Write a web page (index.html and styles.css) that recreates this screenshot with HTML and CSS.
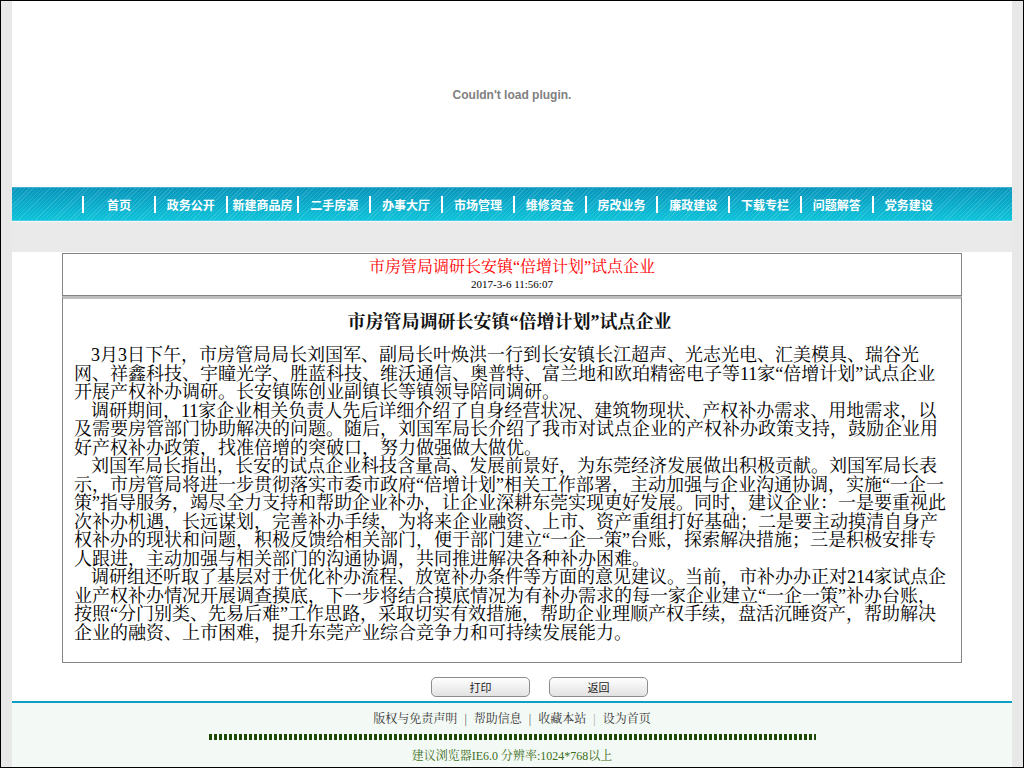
FILE: index.html
```html
<!DOCTYPE html>
<html lang="zh-CN">
<head>
<meta charset="utf-8">
<title>市房管局调研长安镇“倍增计划”试点企业</title>
<link rel="stylesheet" href="styles.css">
</head>
<body>
<div class="frame">
  <div class="page">
    <div class="plugin"><span>Couldn't load plugin.</span></div>
    <nav class="nav">
      <a class="nav-item"><span>首页</span></a>
      <a class="nav-item"><span>政务公开</span></a>
      <a class="nav-item"><span>新建商品房</span></a>
      <a class="nav-item"><span>二手房源</span></a>
      <a class="nav-item"><span>办事大厅</span></a>
      <a class="nav-item"><span>市场管理</span></a>
      <a class="nav-item"><span>维修资金</span></a>
      <a class="nav-item"><span>房改业务</span></a>
      <a class="nav-item"><span>廉政建设</span></a>
      <a class="nav-item"><span>下载专栏</span></a>
      <a class="nav-item"><span>问题解答</span></a>
      <a class="nav-item"><span>党务建设</span></a>
    </nav>
    <div class="band"></div>
    <main class="main">
      <div class="title-box">
        <div class="red-title">市房管局调研长安镇“倍增计划”试点企业</div>
        <div class="date">2017-3-6 11:56:07</div>
      </div>
      <div class="article">
        <h1 class="heading">市房管局调研长安镇“倍增计划”试点企业</h1>
        <div class="body">
          <p>3月3日下午，市房管局局长刘国军、副局长叶焕洪一行到长安镇长江超声、光志光电、汇美模具、瑞谷光<br>网、祥鑫科技、宇瞳光学、胜蓝科技、维沃通信、奥普特、富兰地和欧珀精密电子等11家“倍增计划”试点企业<br>开展产权补办调研。长安镇陈创业副镇长等镇领导陪同调研。</p>
          <p>调研期间，11家企业相关负责人先后详细介绍了自身经营状况、建筑物现状、产权补办需求、用地需求，以<br>及需要房管部门协助解决的问题。随后，刘国军局长介绍了我市对试点企业的产权补办政策支持，鼓励企业用<br>好产权补办政策，找准倍增的突破口，努力做强做大做优。</p>
          <p>刘国军局长指出，长安的试点企业科技含量高、发展前景好，为东莞经济发展做出积极贡献。刘国军局长表<br>示，市房管局将进一步贯彻落实市委市政府“倍增计划”相关工作部署，主动加强与企业沟通协调，实施“一企一<br>策”指导服务，竭尽全力支持和帮助企业补办，让企业深耕东莞实现更好发展。同时，建议企业：一是要重视此<br>次补办机遇，长远谋划，完善补办手续，为将来企业融资、上市、资产重组打好基础；二是要主动摸清自身产<br>权补办的现状和问题，积极反馈给相关部门，便于部门建立“一企一策”台账，探索解决措施；三是积极安排专<br>人跟进，主动加强与相关部门的沟通协调，共同推进解决各种补办困难。</p>
          <p>调研组还听取了基层对于优化补办流程、放宽补办条件等方面的意见建议。当前，市补办办正对214家试点企<br>业产权补办情况开展调查摸底，下一步将结合摸底情况为有补办需求的每一家企业建立“一企一策”补办台账，<br>按照“分门别类、先易后难”工作思路，采取切实有效措施，帮助企业理顺产权手续，盘活沉睡资产，帮助解决<br>企业的融资、上市困难，提升东莞产业综合竞争力和可持续发展能力。</p>
        </div>
      </div>
      <div class="actions">
        <button class="btn" type="button">打印</button>
        <button class="btn" type="button">返回</button>
      </div>
    </main>
    <footer class="footer">
      <div class="links">
        <a>版权与免责声明</a><span class="sep">|</span><a>帮助信息</a><span class="sep">|</span><a>收藏本站</a><span class="sep light">|</span><a>设为首页</a>
      </div>
      <div class="dots"></div>
      <div class="note">建议浏览器IE6.0 分辨率:1024*768以上</div>
    </footer>
  </div>
</div>
</body>
</html>
```
FILE: styles.css
```css
html, body {
  margin: 0;
  padding: 0;
}
body {
  background: #e8e8e8;
  font-family: "Liberation Serif", "Noto Serif CJK SC", "Noto Sans CJK SC", serif;
}
.frame {
  box-sizing: border-box;
  height: 768px;
  border: 1px solid #000;
  overflow: hidden;
}
.page {
  width: 1000px;
  margin: 0 auto;
  background: #fff;
  height: 766px;
  display: flex;
  flex-direction: column;
}
.plugin {
  height: 186px;
  display: flex;
  align-items: center;
  justify-content: center;
  background: #fff;
}
.plugin span {
  font-family: "Liberation Sans", Arial, sans-serif;
  font-weight: bold;
  font-size: 12px;
  color: #808080;
  margin-top: 1px;
}
.nav {
  box-sizing: border-box;
  height: 34px;
  display: flex;
  align-items: center;
  padding-left: 70px;
  border-top: 1px solid #3fb0cf;
  border-bottom: 1px solid #45cde2;
  background:
    repeating-linear-gradient(-45deg, rgba(255,255,255,0.13) 0 1px, rgba(255,255,255,0) 1px 3px),
    linear-gradient(#0795bb, #0bc2d9);
}
.nav-item {
  width: 71.8px;
  flex: none;
  display: flex;
  align-items: center;
  font-family: "Noto Sans CJK SC", sans-serif;
  font-weight: bold;
  font-size: 12px;
  color: #fff;
  white-space: nowrap;
}
.nav-item::before {
  content: "";
  width: 2px;
  height: 17px;
  background: #fff;
  flex: none;
}
.nav-item span {
  flex: 1;
  text-align: center;
}
.band {
  height: 30px;
  background: #eaeaea;
  border-top: 1px solid #f7f7f7;
}
.main {
  padding: 1px 50px 0;
  background: #fff;
}
.title-box {
  border: 1px solid #858585;
  padding: 3px 0 4px;
  text-align: center;
}
.red-title {
  color: #f00;
  font-size: 16px;
  line-height: 20px;
}
.date {
  font-size: 11px;
  line-height: 14px;
  color: #000;
}
.article {
  border: 1px solid #858585;
  border-top: 3px solid #bfbfbf;
  padding: 11px 16px 20px 11px;
  height: 332px;
}
.heading {
  margin: 0;
  text-align: center;
  font-size: 18px;
  line-height: 24px;
  font-weight: bold;
  color: #111;
}
.body {
  margin-top: 12px;
  font-size: 18px;
  line-height: 18.5px;
  color: #000;
  white-space: nowrap;
}
.body p {
  margin: 0;
  text-indent: 17px;
}
.actions {
  display: flex;
  justify-content: center;
  gap: 19px;
  padding: 14px 0 4px 55px;
}
.btn {
  width: 99px;
  height: 20px;
  padding: 0;
  border: 1px solid #8c8c8c;
  border-radius: 5px;
  background: linear-gradient(#ffffff, #ededed 60%, #e2e2e2);
  font-family: "Noto Sans CJK SC", sans-serif;
  font-size: 11px;
  line-height: 18px;
  color: #222;
}
.footer {
  flex: 1;
  border-top: 2px solid #0aa1c4;
  background: #f3faf5;
  display: flex;
  flex-direction: column;
  align-items: center;
}
.links {
  margin-top: 8px;
  font-size: 12px;
  line-height: 16px;
  color: #333;
}
.links .sep {
  margin: 0 7px;
  color: #555;
}
.links .sep.light {
  color: #aaa;
}
.dots {
  margin-top: 7px;
  width: 607px;
  height: 6px;
  background: repeating-linear-gradient(90deg, #1d4a05 0 3px, transparent 3px 5px);
}
.note {
  margin-top: 8px;
  font-size: 12px;
  line-height: 16px;
  color: #3d6d1a;
}
```
